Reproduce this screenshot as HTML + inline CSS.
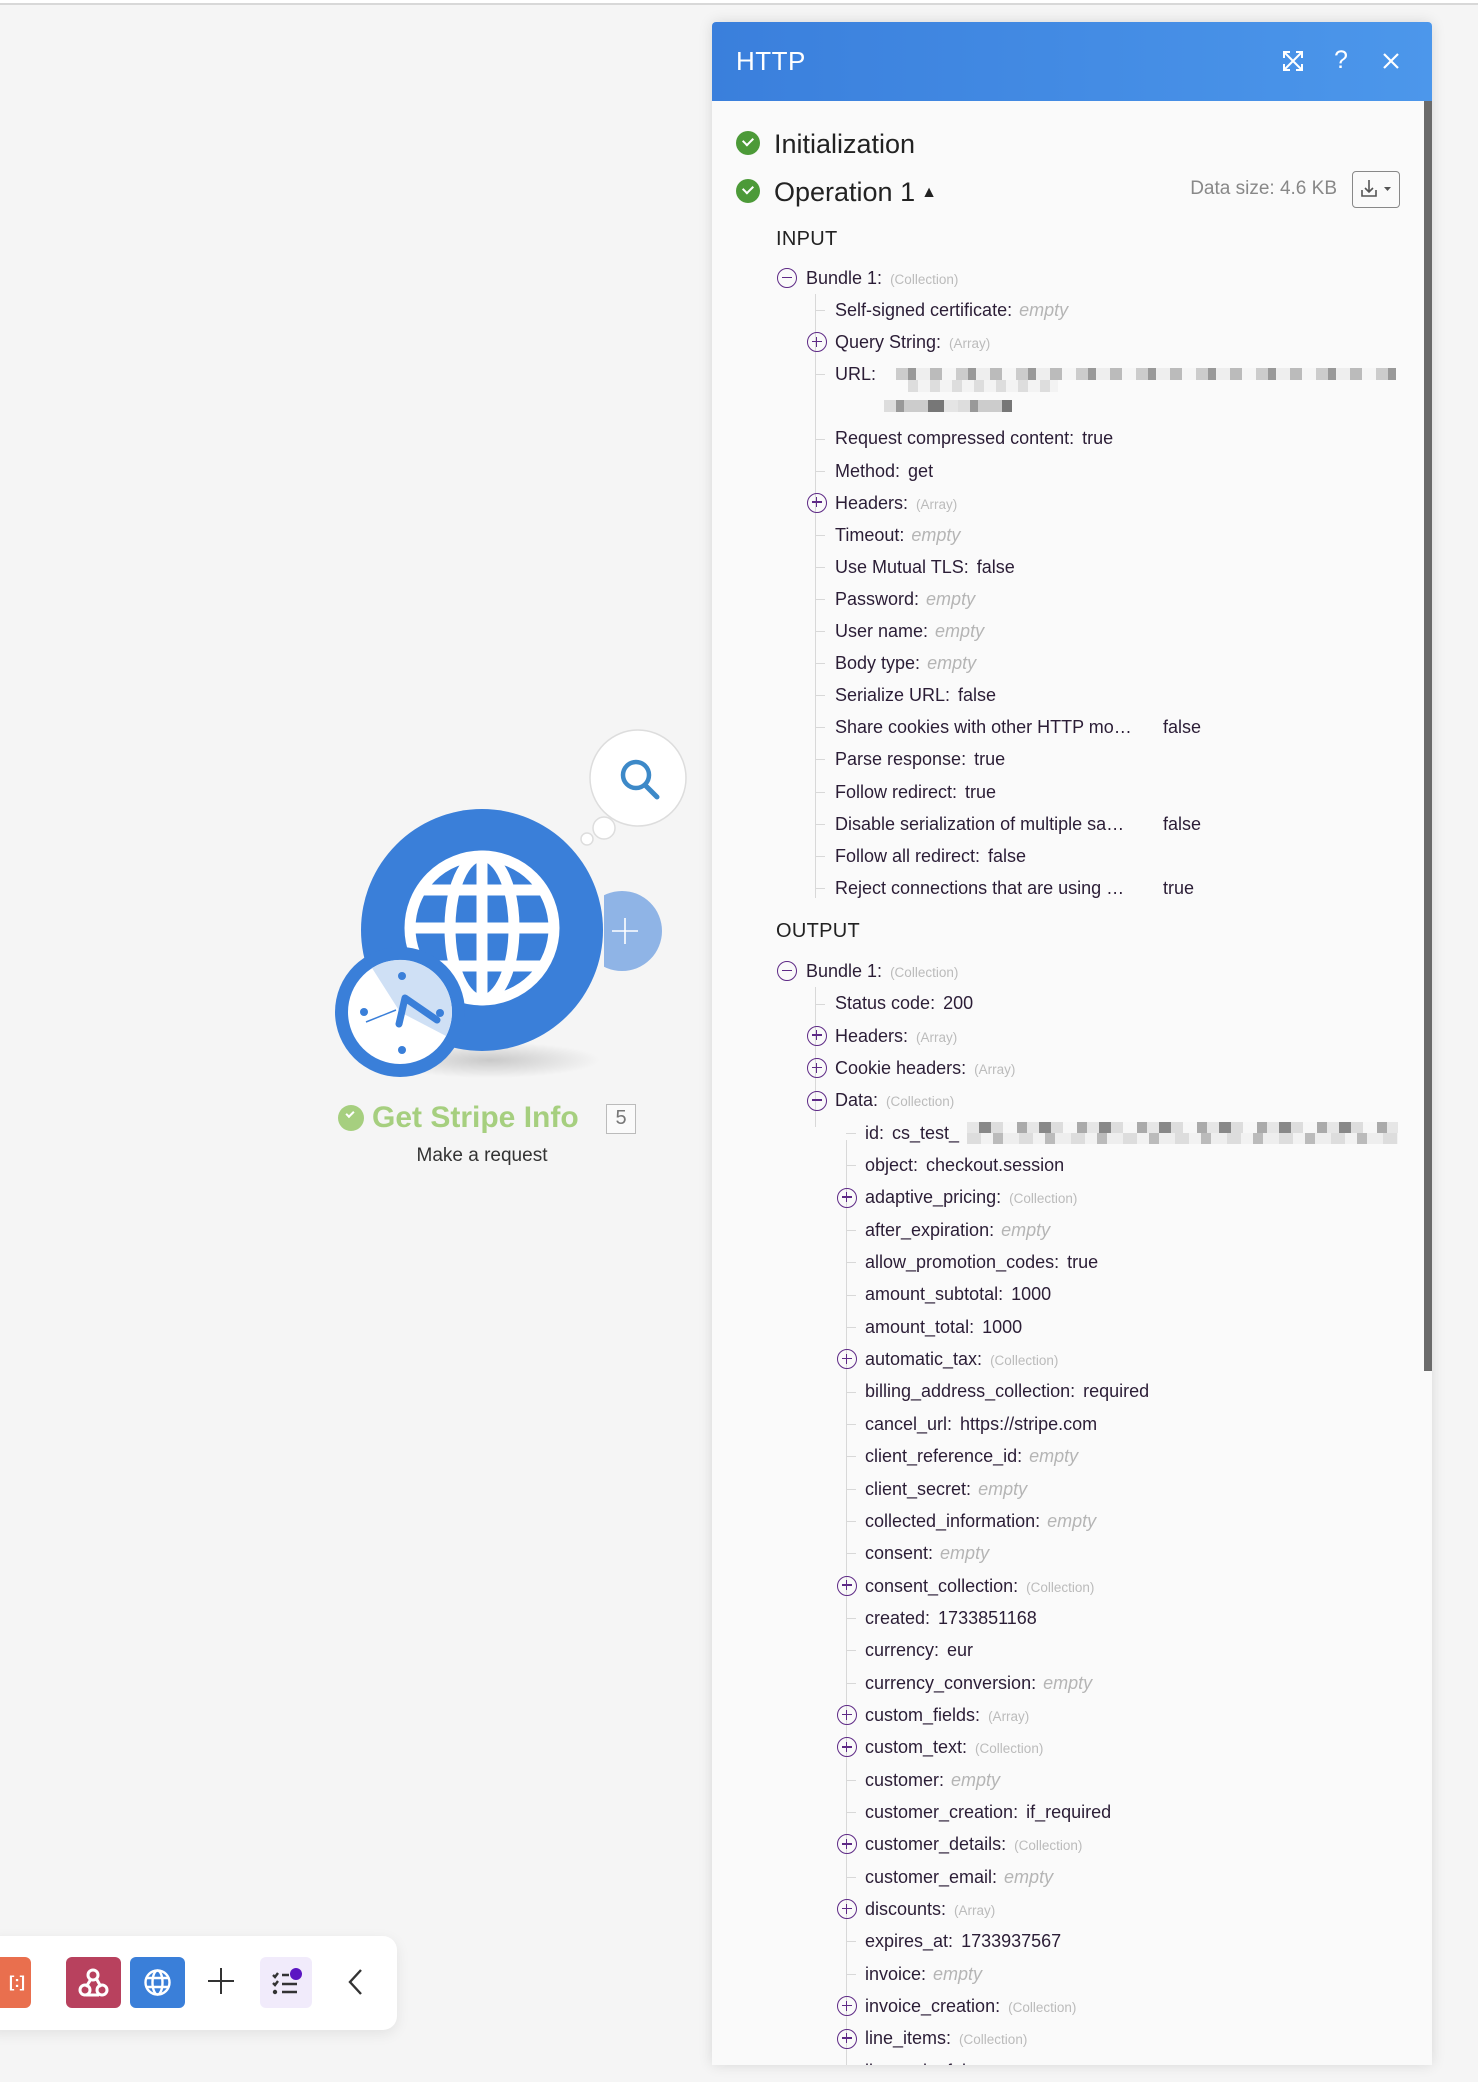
<!DOCTYPE html>
<html><head><meta charset="utf-8"><style>
*{margin:0;padding:0;box-sizing:border-box}
body{width:1478px;height:2082px;background:#f5f5f5;font-family:"Liberation Sans",sans-serif;position:relative;overflow:hidden}
.topline{position:absolute;left:0;top:0;width:1478px;height:5px;background:#fff;border-bottom:2px solid #d8d8d8}
.panel{position:absolute;left:712px;top:22px;width:720px;height:2043px;background:#fafafa;box-shadow:0 0 14px rgba(0,0,0,.12);overflow:hidden;border-radius:4px 4px 0 0}
.hdr{position:absolute;left:0;top:0;width:720px;height:79px;background:linear-gradient(90deg,#3a7fdc,#4c97eb);color:#fff}
.hdr .t{position:absolute;left:24px;top:24px;font-size:26px;letter-spacing:.5px}
.scroll{position:absolute;left:712px;top:79px;width:8px;height:1270px;background:#6b6b6b}
.h{position:absolute;font-size:27px;color:#222;line-height:32px}
.chk{position:absolute;width:24px;height:24px;border-radius:50%;background:#4c9a38}
.chk:after{content:"";position:absolute;left:7px;top:6px;width:8px;height:5px;border-left:2.5px solid #fff;border-bottom:2.5px solid #fff;transform:rotate(-45deg)}
.sec{position:absolute;font-size:20px;color:#222;letter-spacing:.3px}
.list{position:absolute;left:0;width:720px}
.r{position:relative;white-space:nowrap;font-size:18px;color:#2b1d36;overflow:visible}
.li .r{height:32.1px;line-height:32.1px}
.lo .r{height:32.35px;line-height:32.35px}
.r .g{font-size:13.5px;color:#bbb;margin-left:8px}
.r i{color:#b5b5b5;margin-left:7px}
.r .v{margin-left:8px}
.ico{position:absolute;width:20px;height:20px;border:1.6px solid #5e2a86;border-radius:50%;top:50%;margin-top:-10px}
.ico:before{content:"";position:absolute;left:3.5px;top:7.6px;width:10px;height:1.6px;background:#5e2a86}
.ico.p:after{content:"";position:absolute;left:7.8px;top:3.5px;width:1.6px;height:10px;background:#5e2a86}
.tick{position:absolute;top:50%;width:10px;height:1px;background:#d8d8d8}
.vl{position:absolute;width:1px;background:#d8d8d8}
.blur{position:absolute;height:12px}
</style></head><body>
<div class="topline"></div>

<svg style="position:absolute;left:320px;top:720px" width="400" height="460" viewBox="0 0 400 460">
<defs><radialGradient id="sh" cx="50%" cy="50%" r="50%"><stop offset="0" stop-color="#000" stop-opacity=".18"/><stop offset="1" stop-color="#000" stop-opacity="0"/></radialGradient></defs>
<ellipse cx="170" cy="340" rx="110" ry="18" fill="url(#sh)"/>
<circle cx="302" cy="211" r="40" fill="#8fb4e6"/>
<rect x="262" y="160" width="22" height="100" fill="#f5f5f5"/>
<path d="M305 198v26M292 211h26" stroke="#fff" stroke-width="1.6"/>
<circle cx="162" cy="210" r="121" fill="#3a7fd9"/>
<g fill="none" stroke="#fff" stroke-width="11">
<circle cx="162" cy="208" r="72"/>
<ellipse cx="162" cy="208" rx="32" ry="72"/>
<path d="M162 136v144M90 208h144M100 170h124M100 246h124"/>
</g>
<circle cx="80" cy="292" r="65" fill="#3a7fd9"/>
<circle cx="80" cy="292" r="52" fill="#fff"/>
<path d="M52 248a52 52 0 0 1 74 68L80 292z" fill="#cfe0f5"/>
<g fill="#3a7fd9"><circle cx="82" cy="256" r="4"/><circle cx="82" cy="330" r="4"/><circle cx="44" cy="292" r="4"/><circle cx="120" cy="293" r="4"/></g>
<path d="M79 304l6-26 32 22" fill="none" stroke="#3a7fd9" stroke-width="7" stroke-linecap="round" stroke-linejoin="round"/>
<path d="M46 302l30-12" stroke="#3a7fd9" stroke-width="1.5"/>
<circle cx="318" cy="58" r="48" fill="#fff" stroke="#ddd" stroke-width="1.5"/>
<circle cx="284" cy="108" r="11" fill="#fff" stroke="#ddd" stroke-width="1.5"/>
<circle cx="267" cy="119" r="6" fill="#fff" stroke="#ddd" stroke-width="1.5"/>
<circle cx="316" cy="55" r="13" fill="none" stroke="#3d89c8" stroke-width="4.5"/>
<path d="M326 66l11 11" stroke="#3d89c8" stroke-width="5" stroke-linecap="round"/>
<path d="M392 52l10-12v24z" fill="#fafafa"/>
</svg>
<div style="position:absolute;left:338px;top:1105px;width:26px;height:26px;border-radius:50%;background:#a6cf7f"></div>
<div style="position:absolute;left:346px;top:1111px;width:8px;height:5px;border-left:2.5px solid #fff;border-bottom:2.5px solid #fff;transform:rotate(-45deg)"></div>
<div style="position:absolute;left:372px;top:1101px;font-size:30px;font-weight:bold;color:#a6cf7f">Get Stripe Info</div>
<div style="position:absolute;left:606px;top:1104px;width:30px;height:30px;border:1.5px solid #bbb;color:#777;font-size:20px;text-align:center;line-height:27px;background:#fafafa">5</div>
<div style="position:absolute;left:402px;top:1145px;width:160px;text-align:center;font-size:19px;color:#333">Make a request</div>

<div style="position:absolute;left:-20px;top:1936px;width:417px;height:94px;background:#fff;border-radius:14px;box-shadow:0 4px 14px rgba(0,0,0,.08)"></div>
<div style="position:absolute;left:-20px;top:1957px;width:51px;height:51px;background:#e96f4e;border-radius:6px;color:#fff;font-size:16px;font-weight:bold;line-height:51px;text-align:right;padding-right:6px">[:]</div>
<div style="position:absolute;left:66px;top:1957px;width:55px;height:51px;background:#b8415e;border-radius:6px"></div>
<svg style="position:absolute;left:66px;top:1957px" width="55" height="51"><g fill="none" stroke="#fff" stroke-width="3"><circle cx="27" cy="18" r="5"/><circle cx="19" cy="33" r="5"/><circle cx="36" cy="33" r="5"/><path d="M25 22l-5 8M20 38h13M30 21l5 9"/></g></svg>
<div style="position:absolute;left:130px;top:1957px;width:55px;height:51px;background:#3a7fd9;border-radius:6px"></div>
<svg style="position:absolute;left:130px;top:1957px" width="55" height="51"><g fill="none" stroke="#fff" stroke-width="2.4"><circle cx="27.5" cy="25.5" r="12"/><ellipse cx="27.5" cy="25.5" rx="5" ry="12"/><path d="M16 21h23M16 30h23"/></g></svg>
<div style="position:absolute;left:208px;top:1980px;width:26px;height:2px;background:#333"></div>
<div style="position:absolute;left:220px;top:1968px;width:2px;height:26px;background:#333"></div>
<div style="position:absolute;left:260px;top:1957px;width:52px;height:51px;background:#f1ebfb;border-radius:6px"></div>
<svg style="position:absolute;left:260px;top:1957px" width="52" height="51"><g stroke="#333" stroke-width="2.4" fill="none"><path d="M13 18l2 2 3-4M13 26l2 2 3-4M22 18h7M22 27h15M22 35h15"/><circle cx="15" cy="35" r="1" fill="#333"/></g><circle cx="36" cy="17" r="6" fill="#5b16c2"/></svg>
<svg style="position:absolute;left:344px;top:1966px" width="24" height="32"><path d="M17 4L6 16l11 12" fill="none" stroke="#333" stroke-width="2.4"/></svg>

<div class="panel">
<div class="hdr"><div class="t">HTTP</div>
<svg style="position:absolute;left:569px;top:27px" width="24" height="24"><g fill="none" stroke="#fff" stroke-width="2"><path d="M3 3l18 18M21 3L3 21M3 9V3h6M15 3h6v6M21 15v6h-6M9 21H3v-6"/></g></svg>
<div style="position:absolute;left:622px;top:24px;font-size:25px">?</div>
<svg style="position:absolute;left:670px;top:30px" width="18" height="18"><path d="M2 2l14 14M16 2L2 16" stroke="#fff" stroke-width="2.2"/></svg>
</div>
<div class="scroll"></div>

<div class="chk" style="left:24px;top:109px"></div><div class="h" style="left:62px;top:106px">Initialization</div>
<div class="chk" style="left:24px;top:157px"></div><div class="h" style="left:62px;top:154px">Operation 1<span style="font-size:16px;margin-left:6px;vertical-align:4px">▲</span></div>
<div style="position:absolute;left:460px;top:156px;width:165px;text-align:right;font-size:19px;color:#888">Data size: 4.6 KB</div>
<div style="position:absolute;left:640px;top:149px;width:48px;height:37px;border:1.5px solid #888;border-radius:4px"></div>
<svg style="position:absolute;left:640px;top:149px" width="48" height="37"><g fill="none" stroke="#555" stroke-width="1.6"><path d="M17 9v12M13 17l4 4 4-4M10 19v6h14v-6"/></g><path d="M32 16h7l-3.5 4z" fill="#555"/></svg>

<div class="sec" style="left:64px;top:206px">INPUT</div>
<div class="vl" style="left:103px;top:272px;height:604px"></div>
<div class="list li" style="top:240px">
<div class="r" style="padding-left:94px"><span class="ico" style="left:65px"></span>Bundle 1:<span class="g">(Collection)</span></div>
<div class="r" style="padding-left:123px"><span class="tick" style="left:103px"></span>Self-signed certificate:<i>empty</i></div>
<div class="r" style="padding-left:123px"><span class="ico p" style="left:95px"></span>Query String:<span class="g">(Array)</span></div>
<div class="r" style="padding-left:123px"><span class="tick" style="left:103px"></span>URL:</div>
<div class="r"></div>
<div class="r" style="padding-left:123px"><span class="tick" style="left:103px"></span>Request compressed content:<span class="v">true</span></div>
<div class="r" style="padding-left:123px"><span class="tick" style="left:103px"></span>Method:<span class="v">get</span></div>
<div class="r" style="padding-left:123px"><span class="ico p" style="left:95px"></span>Headers:<span class="g">(Array)</span></div>
<div class="r" style="padding-left:123px"><span class="tick" style="left:103px"></span>Timeout:<i>empty</i></div>
<div class="r" style="padding-left:123px"><span class="tick" style="left:103px"></span>Use Mutual TLS:<span class="v">false</span></div>
<div class="r" style="padding-left:123px"><span class="tick" style="left:103px"></span>Password:<i>empty</i></div>
<div class="r" style="padding-left:123px"><span class="tick" style="left:103px"></span>User name:<i>empty</i></div>
<div class="r" style="padding-left:123px"><span class="tick" style="left:103px"></span>Body type:<i>empty</i></div>
<div class="r" style="padding-left:123px"><span class="tick" style="left:103px"></span>Serialize URL:<span class="v">false</span></div>
<div class="r" style="padding-left:123px"><span class="tick" style="left:103px"></span>Share cookies with other HTTP mo…<span style="position:absolute;left:451px">false</span></div>
<div class="r" style="padding-left:123px"><span class="tick" style="left:103px"></span>Parse response:<span class="v">true</span></div>
<div class="r" style="padding-left:123px"><span class="tick" style="left:103px"></span>Follow redirect:<span class="v">true</span></div>
<div class="r" style="padding-left:123px"><span class="tick" style="left:103px"></span>Disable serialization of multiple sa…<span style="position:absolute;left:451px">false</span></div>
<div class="r" style="padding-left:123px"><span class="tick" style="left:103px"></span>Follow all redirect:<span class="v">false</span></div>
<div class="r" style="padding-left:123px"><span class="tick" style="left:103px"></span>Reject connections that are using …<span style="position:absolute;left:451px">true</span></div>
</div>
<div class="blur" style="left:184px;top:346px;width:500px;background:repeating-linear-gradient(90deg,#ccc 0 12px,#999 12px 20px,#eee 20px 34px,#bbb 34px 46px,#f6f6f6 46px 60px)"></div>
<div class="blur" style="left:196px;top:358px;width:150px;background:repeating-linear-gradient(90deg,#ddd 0 10px,#f3f3f3 10px 22px)"></div>
<div class="blur" style="left:172px;top:378px;width:128px;background:repeating-linear-gradient(90deg,#ddd 0 12px,#999 12px 20px,#ccc 20px 44px,#777 44px 60px,#e5e5e5 60px 74px)"></div>

<div class="sec" style="left:64px;top:898px">OUTPUT</div>
<div class="vl" style="left:103px;top:965px;height:140px"></div>
<div class="vl" style="left:134px;top:1118px;height:930px"></div>
<div class="list lo" style="top:933px">
<div class="r" style="padding-left:94px"><span class="ico" style="left:65px"></span>Bundle 1:<span class="g">(Collection)</span></div>
<div class="r" style="padding-left:123px"><span class="tick" style="left:103px"></span>Status code:<span class="v">200</span></div>
<div class="r" style="padding-left:123px"><span class="ico p" style="left:95px"></span>Headers:<span class="g">(Array)</span></div>
<div class="r" style="padding-left:123px"><span class="ico p" style="left:95px"></span>Cookie headers:<span class="g">(Array)</span></div>
<div class="r" style="padding-left:123px"><span class="ico" style="left:95px"></span>Data:<span class="g">(Collection)</span></div>
<div class="r" style="padding-left:153px"><span class="tick" style="left:134px"></span>id:<span class="v">cs_test_</span></div>
<div class="r" style="padding-left:153px"><span class="tick" style="left:134px"></span>object:<span class="v">checkout.session</span></div>
<div class="r" style="padding-left:153px"><span class="ico p" style="left:125px"></span>adaptive_pricing:<span class="g">(Collection)</span></div>
<div class="r" style="padding-left:153px"><span class="tick" style="left:134px"></span>after_expiration:<i>empty</i></div>
<div class="r" style="padding-left:153px"><span class="tick" style="left:134px"></span>allow_promotion_codes:<span class="v">true</span></div>
<div class="r" style="padding-left:153px"><span class="tick" style="left:134px"></span>amount_subtotal:<span class="v">1000</span></div>
<div class="r" style="padding-left:153px"><span class="tick" style="left:134px"></span>amount_total:<span class="v">1000</span></div>
<div class="r" style="padding-left:153px"><span class="ico p" style="left:125px"></span>automatic_tax:<span class="g">(Collection)</span></div>
<div class="r" style="padding-left:153px"><span class="tick" style="left:134px"></span>billing_address_collection:<span class="v">required</span></div>
<div class="r" style="padding-left:153px"><span class="tick" style="left:134px"></span>cancel_url:<span class="v">https://stripe.com</span></div>
<div class="r" style="padding-left:153px"><span class="tick" style="left:134px"></span>client_reference_id:<i>empty</i></div>
<div class="r" style="padding-left:153px"><span class="tick" style="left:134px"></span>client_secret:<i>empty</i></div>
<div class="r" style="padding-left:153px"><span class="tick" style="left:134px"></span>collected_information:<i>empty</i></div>
<div class="r" style="padding-left:153px"><span class="tick" style="left:134px"></span>consent:<i>empty</i></div>
<div class="r" style="padding-left:153px"><span class="ico p" style="left:125px"></span>consent_collection:<span class="g">(Collection)</span></div>
<div class="r" style="padding-left:153px"><span class="tick" style="left:134px"></span>created:<span class="v">1733851168</span></div>
<div class="r" style="padding-left:153px"><span class="tick" style="left:134px"></span>currency:<span class="v">eur</span></div>
<div class="r" style="padding-left:153px"><span class="tick" style="left:134px"></span>currency_conversion:<i>empty</i></div>
<div class="r" style="padding-left:153px"><span class="ico p" style="left:125px"></span>custom_fields:<span class="g">(Array)</span></div>
<div class="r" style="padding-left:153px"><span class="ico p" style="left:125px"></span>custom_text:<span class="g">(Collection)</span></div>
<div class="r" style="padding-left:153px"><span class="tick" style="left:134px"></span>customer:<i>empty</i></div>
<div class="r" style="padding-left:153px"><span class="tick" style="left:134px"></span>customer_creation:<span class="v">if_required</span></div>
<div class="r" style="padding-left:153px"><span class="ico p" style="left:125px"></span>customer_details:<span class="g">(Collection)</span></div>
<div class="r" style="padding-left:153px"><span class="tick" style="left:134px"></span>customer_email:<i>empty</i></div>
<div class="r" style="padding-left:153px"><span class="ico p" style="left:125px"></span>discounts:<span class="g">(Array)</span></div>
<div class="r" style="padding-left:153px"><span class="tick" style="left:134px"></span>expires_at:<span class="v">1733937567</span></div>
<div class="r" style="padding-left:153px"><span class="tick" style="left:134px"></span>invoice:<i>empty</i></div>
<div class="r" style="padding-left:153px"><span class="ico p" style="left:125px"></span>invoice_creation:<span class="g">(Collection)</span></div>
<div class="r" style="padding-left:153px"><span class="ico p" style="left:125px"></span>line_items:<span class="g">(Collection)</span></div>
<div class="r" style="padding-left:153px"><span class="tick" style="left:134px"></span>livemode: false</div>
</div>
<div class="blur" style="left:255px;top:1100px;width:431px;height:11px;background:repeating-linear-gradient(90deg,#e6e6e6 0 12px,#888 12px 24px,#ddd 24px 36px,#f7f7f7 36px 50px,#aaa 50px 60px)"></div>
<div class="blur" style="left:255px;top:1111px;width:431px;height:11px;background:repeating-linear-gradient(90deg,#ddd 0 14px,#f2f2f2 14px 26px,#bbb 26px 36px,#eee 36px 52px)"></div>
</div>
</body></html>
